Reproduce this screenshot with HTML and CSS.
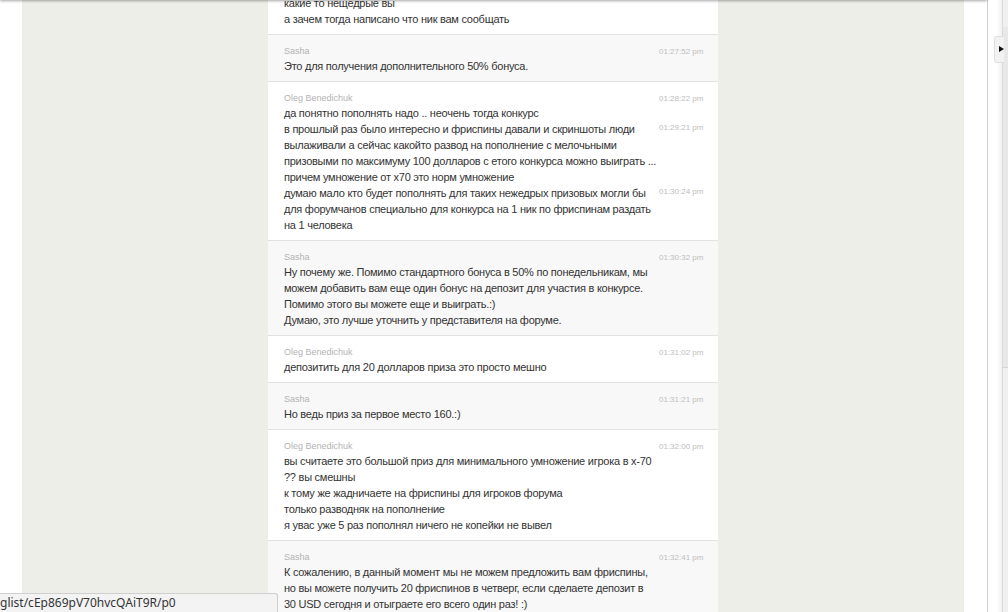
FILE: index.html
```html
<!DOCTYPE html>
<html lang="ru">
<head>
  <meta charset="UTF-8">
  <title>Chat</title>
  <link rel="stylesheet" href="styles.css">
</head>
<body>
  <div class="page">
    <div class="gutter"></div>

    <div class="stage">
      <div class="chat">
        <div class="msg op first">
          <div class="msg-head"><span class="name">Oleg Benedichuk</span><span class="time">01:27:10 pm</span></div>
          <div class="row"><div class="text">какие то нещедрые вы<br>а зачем тогда написано что ник вам сообщать</div></div>
        </div>

        <div class="msg agent">
          <div class="msg-head"><span class="name">Sasha</span><span class="time">01:27:52 pm</span></div>
          <div class="row"><div class="text">Это для получения дополнительного 50% бонуса.</div></div>
        </div>

        <div class="msg op">
          <div class="msg-head"><span class="name">Oleg Benedichuk</span><span class="time">01:28:22 pm</span></div>
          <div class="row"><div class="text">да понятно пополнять надо .. неочень тогда конкурс</div></div>
          <div class="row"><div class="text">в прошлый раз было интересно и фриспины давали и скриншоты люди вылаживали а сейчас какойто развод на пополнение с мелочьными призовыми по максимуму 100 долларов с етого конкурса можно выиграть ...<br>причем умножение от х70 это норм умножение</div><span class="time">01:29:21 pm</span></div>
          <div class="row"><div class="text">думаю мало кто будет пополнять для таких нежедрых призовых могли бы для форумчанов специально для конкурса на 1 ник по фриспинам раздать на 1 человека</div><span class="time">01:30:24 pm</span></div>
        </div>

        <div class="msg agent">
          <div class="msg-head"><span class="name">Sasha</span><span class="time">01:30:32 pm</span></div>
          <div class="row"><div class="text">Ну почему же. Помимо стандартного бонуса в 50% по понедельникам, мы можем добавить вам еще один бонус на депозит для участия в конкурсе. Помимо этого вы можете еще и выиграть.:)<br>Думаю, это лучше уточнить у представителя на форуме.</div></div>
        </div>

        <div class="msg op">
          <div class="msg-head"><span class="name">Oleg Benedichuk</span><span class="time">01:31:02 pm</span></div>
          <div class="row"><div class="text">депозитить для 20 долларов приза это просто мешно</div></div>
        </div>

        <div class="msg agent">
          <div class="msg-head"><span class="name">Sasha</span><span class="time">01:31:21 pm</span></div>
          <div class="row"><div class="text">Но ведь приз за первое место 160.:)</div></div>
        </div>

        <div class="msg op">
          <div class="msg-head"><span class="name">Oleg Benedichuk</span><span class="time">01:32:00 pm</span></div>
          <div class="row"><div class="text">вы считаете это большой приз для минимального умножение игрока в х-70 ?? вы смешны<br>к тому же жадничаете на фриспины для игроков форума<br>только разводняк на пополнение<br>я увас уже 5 раз пополнял ничего не копейки не вывел</div></div>
        </div>

        <div class="msg agent">
          <div class="msg-head"><span class="name">Sasha</span><span class="time">01:32:41 pm</span></div>
          <div class="row"><div class="text">К сожалению, в данный момент мы не можем предложить вам фриспины, но вы можете получить 20 фриспинов в четверг, если сделаете депозит в 30 USD сегодня и отыграете его всего один раз! :)</div></div>
        </div>
      </div>
    </div>

    <div class="edge"></div>

    <div class="sidebar">
      <div class="side-fade"></div>
      <div class="track"><div class="thumb"></div></div>
      <div class="side-tab"><span class="arrow"></span></div>
    </div>
  </div>

  <!-- header shadow peeking from above -->
  <div class="top-shadow"></div>

  <!-- browser status bubble -->
  <div class="status">glist/cEp869pV70hvcQAiT9R/p0</div>
</body>
</html>
```

FILE: styles.css
```css
html, body {
  margin: 0;
  height: 100%;
  overflow: hidden;
}

body {
  font-family: "Liberation Sans", Arial, sans-serif;
  color: #333;
  background: #fff;
}

.page {
  display: flex;
  height: 612px;
}

.gutter {
  width: 22px;
  flex: none;
  background: #fff;
}

.stage {
  flex: 1;
  background: #eeeee9;
  overflow: hidden;
}

.chat {
  width: 450px;
  margin-left: 246px;
  background: #fff;
}

.msg {
  padding: 9px 15px 7px 16px;
  border-top: 1px solid #e2e2e2;
}

.msg.first {
  border-top: none;
  margin-top: -28px;
}

.msg.agent {
  background: #f8f8f8;
}

.msg-head {
  display: flex;
  justify-content: space-between;
  align-items: center;
  height: 14px;
}

.name {
  font-size: 9px;
  color: #b3b3b3;
}

.time {
  width: 44px;
  flex: none;
  margin-left: auto;
  text-align: right;
  font-size: 8px;
  color: #bdbdbd;
  white-space: nowrap;
}

.row {
  display: flex;
  align-items: flex-start;
}

.row .time {
  line-height: 14px;
}

.text {
  flex: none;
  width: 373px;
  font-size: 11px;
  letter-spacing: -0.25px;
  line-height: 16px;
  color: #333;
}

.edge {
  width: 23px;
  flex: none;
  background: #fff;
  border-right: 1px solid #d0d0d0;
}

.sidebar {
  width: 20px;
  flex: none;
  position: relative;
  display: flex;
}

.side-fade {
  width: 14px;
  background: linear-gradient(to right, #fff 60%, #f1f1f1);
}

.track {
  flex: 1;
  background: #f0f0f0;
  border-left: 1px solid #dadada;
}

.thumb {
  margin-top: 27px;
  height: 340px;
  background: #e8e8e8;
  border-bottom: 1px solid #d6d6d6;
}

.side-tab {
  position: absolute;
  left: 6px;
  top: 36px;
  width: 9px;
  height: 25px;
  background: #f2f2f2;
  border: 1px solid #e0e0e0;
  border-right: none;
  border-radius: 3px 0 0 3px;
}

.arrow {
  position: absolute;
  left: 4px;
  top: 9px;
  width: 0;
  height: 0;
  border-top: 3px solid transparent;
  border-bottom: 3px solid transparent;
  border-left: 5px solid #111;
}

.top-shadow {
  position: absolute;
  left: 0;
  top: -10px;
  width: 987px;
  height: 10px;
  background: #ddd;
  box-shadow: 0 1px 3px rgba(0, 0, 0, 0.35);
}

.status {
  position: absolute;
  left: 0;
  bottom: 0;
  width: 277px;
  height: 18px;
  padding-left: 0;
  background: #f3f3f3;
  border: 1px solid #cfcfcf;
  border-left: none;
  border-bottom: none;
  border-radius: 0 3px 0 0;
  font-family: "Noto Sans", "Open Sans", sans-serif;
  font-size: 12px;
  line-height: 18px;
  color: #333;
  white-space: nowrap;
  overflow: hidden;
}
```
